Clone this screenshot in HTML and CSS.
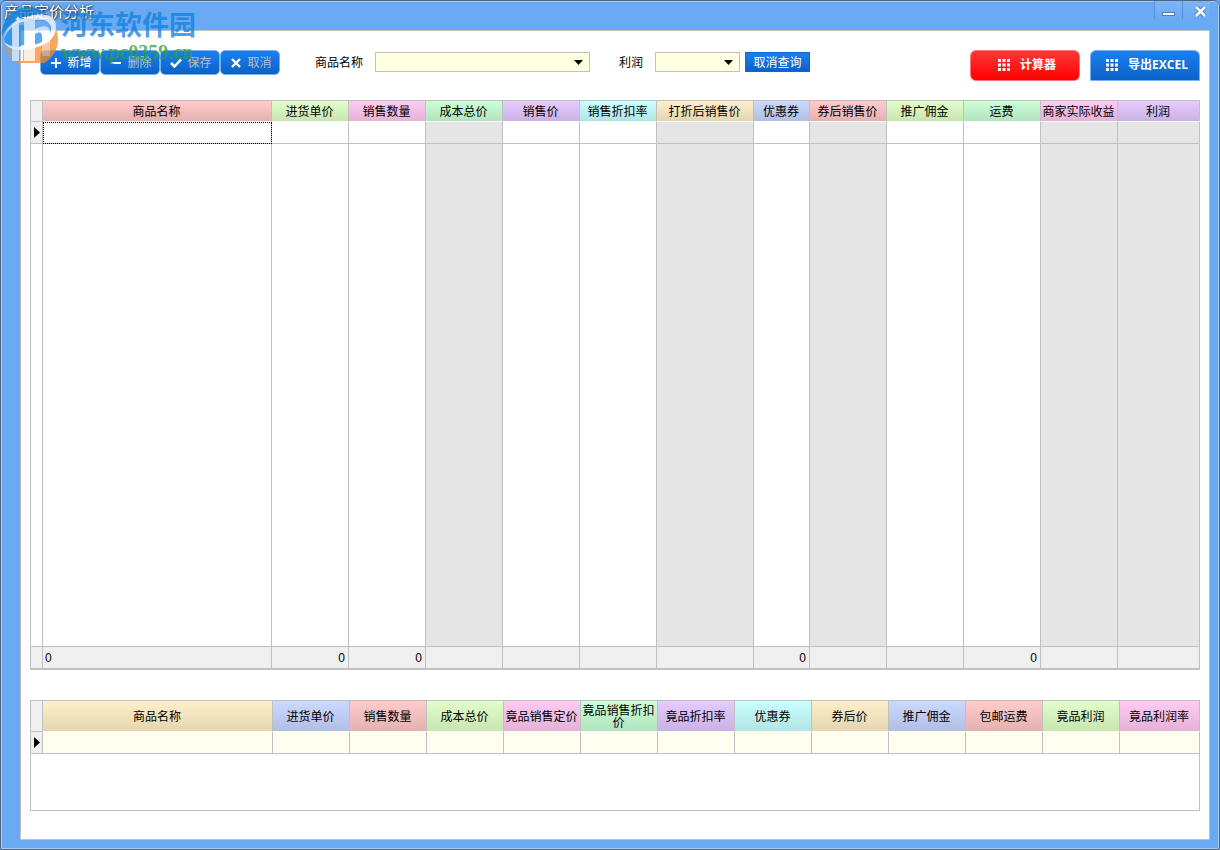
FILE: index.html
```
<!DOCTYPE html>
<html lang="zh-CN">
<head>
<meta charset="utf-8">
<title>产品定价分析</title>
<link rel="stylesheet" href="styles.css">
</head>
<body>
<div class="window">
  <header class="titlebar">
    <h1 class="title">产品定价分析</h1>
    <div class="controls">
      <button class="control" aria-label="最小化"><svg width="14" height="14" viewBox="0 0 14 14"><path d="M0 9h13" stroke="#4b7fc0" stroke-width="4"/><path d="M1 9h11" stroke="#fff" stroke-width="2"/></svg></button>
      <button class="control" aria-label="关闭"><svg width="14" height="14" viewBox="0 0 14 14"><path d="M2 2l9 9M11 2l-9 9" stroke="#4b7fc0" stroke-width="4.500"/><path d="M2 2l9 9M11 2l-9 9" stroke="#fff" stroke-width="2.500"/></svg></button>
    </div>
  </header>
  <main class="panel">
    <div class="toolbar">
      <div class="actions">
        <button class="action"><svg width="12" height="12" viewBox="0 0 12 12"><path d="M6 1v10M1 6h10" stroke="#fff" stroke-width="2"/></svg>新增</button>
        <button class="action muted"><svg width="12" height="12" viewBox="0 0 12 12"><path d="M1 6h10" stroke="#fff" stroke-width="2"/></svg>删除</button>
        <button class="action muted"><svg width="12" height="12" viewBox="0 0 12 12"><path d="M1 6l3.500 3.500L11 2.500" fill="none" stroke="#fff" stroke-width="2.500"/></svg>保存</button>
        <button class="action muted"><svg width="12" height="12" viewBox="0 0 12 12"><path d="M2 2l8 8M10 2l-8 8" stroke="#fff" stroke-width="2.400"/></svg>取消</button>
      </div>
      <div class="filters">
        <label for="product">商品名称</label>
        <span class="combo combo-wide"><select id="product"><option></option></select><svg width="9" height="5" viewBox="0 0 9 5"><path d="M0 0h9L4.500 5z"/></svg></span>
        <label class="profit" for="profit">利润</label>
        <span class="combo"><select id="profit"><option></option></select><svg width="9" height="5" viewBox="0 0 9 5"><path d="M0 0h9L4.500 5z"/></svg></span>
        <button class="reset">取消查询</button>
      </div>
      <div class="tools">
        <button class="tool tool-red"><svg width="12" height="12" viewBox="0 0 12 12"><path d="M0 0h3v3H0zM4.500 0h3v3h-3zM9 0h3v3H9zM0 4.500h3v3H0zM4.500 4.500h3v3h-3zM9 4.500h3v3H9zM0 9h3v3H0zM4.500 9h3v3h-3zM9 9h3v3H9z" fill="#fff"/></svg>计算器</button>
        <button class="tool tool-blue"><svg width="12" height="12" viewBox="0 0 12 12"><path d="M0 0h3v3H0zM4.500 0h3v3h-3zM9 0h3v3H9zM0 4.500h3v3H0zM4.500 4.500h3v3h-3zM9 4.500h3v3H9zM0 9h3v3H0zM4.500 9h3v3h-3zM9 9h3v3H9z" fill="#fff"/></svg>导出EXCEL</button>
      </div>
    </div>
    <div class="pricing">
      <table class="grid">
        <colgroup><col class="c-mark"><col><col class="c-std"><col class="c-std"><col class="c-std"><col class="c-std"><col class="c-std"><col class="c-big"><col class="c-small"><col class="c-std"><col class="c-std"><col class="c-std"><col class="c-std"><col class="c-last"></colgroup>
        <thead><tr>
          <td class="mark"></td><th class="red">商品名称</th><th class="green">进货单价</th><th class="pink">销售数量</th><th class="mint">成本总价</th><th class="violet">销售价</th><th class="cyan">销售折扣率</th><th class="sand">打折后销售价</th><th class="blue">优惠券</th><th class="red">券后销售价</th><th class="green">推广佣金</th><th class="mint">运费</th><th class="pink">商家实际收益</th><th class="violet">利润</th>
        </tr></thead>
        <tbody>
          <tr class="row"><td class="mark"><svg width="6" height="11" viewBox="0 0 6 11"><path d="M0 0l6 5.500L0 11z"/></svg></td><td class="focus"></td><td></td><td></td><td class="calc"></td><td></td><td></td><td class="calc"></td><td></td><td class="calc"></td><td></td><td></td><td class="calc"></td><td class="calc"></td></tr>
          <tr class="fill"><td></td><td></td><td></td><td></td><td class="calc"></td><td></td><td></td><td class="calc"></td><td></td><td class="calc"></td><td></td><td></td><td class="calc"></td><td class="calc"></td></tr>
        </tbody>
        <tfoot><tr><td></td><td class="left">0</td><td>0</td><td>0</td><td></td><td></td><td></td><td></td><td>0</td><td></td><td></td><td>0</td><td></td><td></td></tr></tfoot>
      </table>
    </div>
    <div class="rivals">
      <table class="grid">
        <colgroup><col class="c-mark"><col><col class="c-std"><col class="c-std"><col class="c-std"><col class="c-std"><col class="c-std"><col class="c-std"><col class="c-std"><col class="c-std"><col class="c-std"><col class="c-std"><col class="c-std"><col class="c-edge"></colgroup>
        <thead><tr>
          <td class="mark"></td><th class="sand">商品名称</th><th class="blue">进货单价</th><th class="red">销售数量</th><th class="green">成本总价</th><th class="pink">竟品销售定价</th><th class="mint">竟品销售折扣价</th><th class="violet">竟品折扣率</th><th class="cyan">优惠券</th><th class="sand">券后价</th><th class="blue">推广佣金</th><th class="red">包邮运费</th><th class="green">竟品利润</th><th class="pink">竟品利润率</th>
        </tr></thead>
        <tbody>
          <tr class="row cream"><td class="mark"><svg width="6" height="11" viewBox="0 0 6 11"><path d="M0 0l6 5.500L0 11z"/></svg></td><td></td><td></td><td></td><td></td><td></td><td></td><td></td><td></td><td></td><td></td><td></td><td></td><td></td></tr>
        </tbody>
      </table>
    </div>
  </main>
  <div class="watermark">
    <svg width="58" height="56" viewBox="0 0 58 56">
      <path d="M1 30A27 27 0 0 1 47 8Q34 6 23 10 6 16 1 30z" fill="#0f7cd4"/>
      <path d="M3 34q2-9 9-14v19q-7-1-9-5zM18 18h6v20l-6 1zM34 26q7-4 7 3v7l-7 2zM49 16q6 7 0 14z" fill="#2490e6"/>
      <path d="M55 22A27 27 0 0 1 14 54h8V43q26-3 33-21z" fill="#f58a2c"/>
      <path d="M2 37q4 5 10 6v10Q5 47 2 37z" fill="#f58a2c" opacity="0.6"/>
      <path d="M11 17l7-5v42h-7zM23 14l11-4v12q15-7 15 4v9l-8 2v-8q0-6-7-2v27H23z" fill="#fff" opacity="0.8"/>
      <path d="M41 37l8-2v14h-8z" fill="#fff" opacity="0.4"/>
      <path d="M2 33Q6 14 33 8q22-3 22 12 0 18-31 23-18 1-22-10 4 8 20 7 27-3 28-18 0-11-17-9Q8 14 2 33z" fill="#fff"/>
      <path d="M17 9l1 2 2 1-2 1-1 2-1-2-2-1 2-1z" fill="#fff"/>
    </svg>
    <div class="wm-text"><span class="wm-name">河东软件园</span><span class="wm-site">www.pc0359.cn</span></div>
  </div>
</div>
</body>
</html>
```
FILE: styles.css
```
* { box-sizing: border-box; }

body {
  margin: 0;
  background: #6aaaf4;
  color: #000;
  font: 12px/16px "Liberation Sans", "Noto Sans CJK SC", sans-serif;
}

button, select { font: inherit; margin: 0; }

.window {
  position: relative;
  display: flex;
  flex-direction: column;
  min-height: 100vh;
  padding: 0 9px 9px 19px;
  border: 1px solid #50647d;
  border-radius: 6px 6px 2px 2px;
  box-shadow: inset 0 0 0 1px #a4cdfb;
  background: #6aaaf4;
}

.titlebar {
  display: flex;
  justify-content: space-between;
  height: 29px;
  margin-left: -16px;
}

.title {
  margin: 0;
  padding-top: 1px;
  color: #fff;
  font-size: 15px;
  font-weight: 400;
  line-height: 20px;
  text-shadow: 0 0 2px #234, 1px 1px 2px #234;
}

.controls { display: flex; height: 18px; }

.control {
  display: grid;
  place-items: center;
  width: 28px;
  padding: 4px 0 0;
  border: 0;
  border-left: 1px solid #5590d8;
  background: linear-gradient(#7db6f7, #6aaaf4);
}

.control:last-child { padding-left: 8px; }

.panel {
  flex: 1;
  display: flex;
  flex-direction: column;
  padding: 19px 9px 28px;
  border: 1px solid #c0c0c0;
  background: #fff;
}

.toolbar {
  display: flex;
  align-items: flex-start;
  height: 50px;
  padding-left: 10px;
}

.actions { display: flex; }

.action {
  display: flex;
  align-items: center;
  justify-content: center;
  gap: 5px;
  width: 60px;
  height: 25px;
  padding: 1px 0 0 2px;
  border: 1px solid #77b0ee;
  border-radius: 5px;
  background: linear-gradient(#1b7ff0, #0c62c6);
  color: #fff;
}

.muted { color: #b9c0c9; }

.filters {
  display: flex;
  align-items: center;
  margin: 2px 0 0 35px;
}

.filters label { padding-top: 2px; }

.combo {
  display: grid;
  align-items: center;
  width: 85px;
  margin-left: 12px;
}

.combo-wide { width: 215px; }

.combo > * { grid-area: 1 / 1; }

.combo select {
  appearance: none;
  width: 100%;
  height: 20px;
  border: 1px solid #c0c0c0;
  border-radius: 0;
  background: #ffffe1;
}

.combo svg {
  justify-self: end;
  margin-right: 7px;
  pointer-events: none;
}

.profit { margin-left: 29px; }

.reset {
  width: 65px;
  height: 20px;
  margin-left: 5px;
  padding: 1px 0 0;
  border: 1px solid #1267ca;
  background: linear-gradient(#1b7ff0, #0c62c6);
  color: #fff;
}

.tools {
  display: flex;
  gap: 10px;
  margin-left: auto;
}

.tool {
  display: flex;
  align-items: center;
  justify-content: center;
  gap: 10px;
  width: 110px;
  height: 31px;
  padding: 0 0 2px 4px;
  color: #fff;
  font-weight: 700;
  font-family: "Open Sans", "Noto Sans CJK SC", sans-serif;
}

.tool-red {
  border: 1px solid #ff7474;
  border-radius: 6px;
  background: linear-gradient(#ff3838, #f00);
}

.tool-blue {
  border: 1px solid #77b0ee;
  border-radius: 6px 6px 0 0;
  background: linear-gradient(#1b7ff0, #0c62c6);
}

.pricing {
  flex: 1;
  display: grid;
  border: 1px solid #c0c0c0;
  border-right: 0;
}

.rivals {
  min-height: 111px;
  margin-top: 30px;
  border: 1px solid #c0c0c0;
}

.rivals .grid { width: calc(100% + 1px); }

.grid {
  width: 100%;
  table-layout: fixed;
  border-collapse: separate;
  border-spacing: 0;
}

.c-mark { width: 12px; }
.c-std { width: 77px; }
.c-big { width: 97px; }
.c-small { width: 56px; }
.c-last { width: 82px; }
.c-edge { width: 80px; }

.grid th, .grid td {
  padding: 0;
  border-right: 1px solid #c0c0c0;
}

.grid th {
  height: 21px;
  padding: 2px 1px 0 0;
  border-bottom: 1px solid #fff;
  background-clip: padding-box;
  font-weight: 400;
  line-height: 12px;
}

.grid .mark {
  padding-left: 3px;
  border-bottom: 1px solid #c0c0c0;
  background: #f0f0f0;
}

.rivals .grid th { height: 31px; }

.mark svg { display: block; }

.row td {
  height: 22px;
  border-bottom: 1px solid #c0c0c0;
}

.cream td { background: #fffff0; }

.grid .calc { background: #e5e5e5; }

.row .focus {
  outline: 1px dotted #000;
  outline-offset: -1px;
}

tfoot td {
  height: 23px;
  border-top: 1px solid #c0c0c0;
  border-bottom: 1px solid #c0c0c0;
  background: #f0f0f0;
  text-align: right;
}

.grid tfoot td { padding: 0 3px 0 2px; }
.grid tfoot .left { text-align: left; }

.red { background: linear-gradient(#ffcbcb, #e4b1b1); }
.green { background: linear-gradient(#e2ffcb, #c8e4b1); }
.pink { background: linear-gradient(#ffcbf2, #e4b1d7); }
.mint { background: linear-gradient(#cbffd8, #b1e4be); }
.violet { background: linear-gradient(#e5cbff, #cab1e4); }
.cyan { background: linear-gradient(#cbffff, #b1e4e4); }
.sand { background: linear-gradient(#fff0cb, #e4d5b1); }
.blue { background: linear-gradient(#cbd8ff, #b1bee4); }

.watermark {
  position: absolute;
  top: 6px;
  left: 0;
  display: flex;
  gap: 2px;
  opacity: 0.75;
  pointer-events: none;
}

.wm-text { display: flex; flex-direction: column; }

.wm-name {
  color: #0f80dd;
  font: 700 27px/34px "Noto Sans CJK SC", sans-serif;
}

.wm-site {
  color: #2f9e3c;
  font: 700 20px/22px "Liberation Serif", serif;
}
```
